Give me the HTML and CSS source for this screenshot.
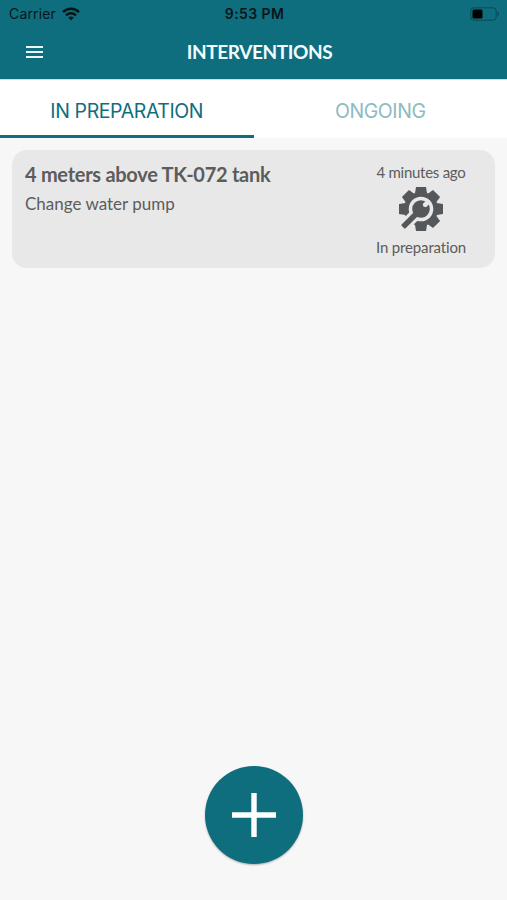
FILE: index.html
```html
<!DOCTYPE html>
<html lang="en">
<head>
    <meta charset="UTF-8">
    <meta name="viewport" content="width=device-width, initial-scale=1.0">
    <title>Interventions</title>
    <link rel="stylesheet" href="styles.css">
</head>
<body>
    <header>
        <div class="status-bar">
            <div class="carrier">
                <span>Carrier</span>
                <svg class="wifi" viewBox="0 0 18 14">
                    <path d="M1 5.1C5.5 .6 12.5 .6 17 5.1" fill="none" stroke="#07161a" stroke-width="2.5"/>
                    <path d="M4 8.3C6.8 5.6 11.2 5.6 14 8.3" fill="none" stroke="#07161a" stroke-width="2.5"/>
                    <path d="M6.2 10.6C7.8 9.1 10.2 9.1 11.8 10.6L9 13.4Z" fill="#07161a"/>
                </svg>
            </div>
            <div class="time">9:53 PM</div>
            <svg class="battery" viewBox="0 0 30 14">
                <rect x=".8" y=".8" width="25.4" height="12.4" rx="3" fill="none" stroke="#0a4954" stroke-width="1"/>
                <rect x="2.5" y="2.5" width="10" height="9" rx="1.5" fill="#000"/>
                <path d="M27.6 4.8C29.6 5.6 29.6 8.4 27.6 9.2Z" fill="#0a4954"/>
            </svg>
        </div>
        <div class="nav-bar">
            <button class="menu" aria-label="Menu">
                <span></span>
                <span></span>
                <span></span>
            </button>
            <h1>INTERVENTIONS</h1>
        </div>
    </header>

    <nav class="tabs">
        <a class="tab active">IN PREPARATION</a>
        <a class="tab">ONGOING</a>
    </nav>

    <main>
        <div class="card">
            <div class="card-text">
                <h2>4 meters above TK-072 tank</h2>
                <p>Change water pump</p>
            </div>
            <div class="card-status">
                <span class="date">4 minutes ago</span>
                <!-- Gear with a wrench -->
                <svg class="gear" viewBox="-22 -22 44 44">
                    <g fill="#54585a">
                        <circle r="17"/>
                        <path id="tooth" d="M-6.3 -14L-5 -22H5L6.3 -14Z"/>
                        <use href="#tooth" transform="rotate(45)"/>
                        <use href="#tooth" transform="rotate(90)"/>
                        <use href="#tooth" transform="rotate(135)"/>
                        <use href="#tooth" transform="rotate(180)"/>
                        <use href="#tooth" transform="rotate(270)"/>
                        <use href="#tooth" transform="rotate(315)"/>
                    </g>
                    <g transform="rotate(45)">
                        <circle r="12.3" fill="#e8e8e8"/>
                        <rect x="-5.8" y="8" width="11.6" height="17" fill="#e8e8e8"/>
                        <circle r="8.8" fill="#54585a"/>
                        <rect x="-2.8" y="6" width="5.6" height="19.6" rx="1" fill="#54585a"/>
                        <path d="M-2.3 -10V-4.8L0 -3.4L2.3 -4.8V-10Z" fill="#e8e8e8"/>
                    </g>
                </svg>
                <span class="state">In preparation</span>
            </div>
        </div>
    </main>

    <button class="add" aria-label="Add">
        <svg viewBox="0 0 44 44">
            <path d="M22 0V44M0 22H44" stroke="#fff" stroke-width="5.4"/>
        </svg>
    </button>
</body>
</html>
```

FILE: styles.css
```css
* {
    box-sizing: border-box;
}

body {
    margin: 0;
    height: 900px;
    display: flex;
    flex-direction: column;
    font-family: Lato, sans-serif;
    background-color: #f7f7f7;
    color: #5c5c5c;
}

h1, h2, p {
    margin: 0;
}

button {
    border: none;
    padding: 0;
    cursor: pointer;
}

header {
    height: 79px;
    background-color: #0f6e7e;
}

.status-bar {
    display: grid;
    grid-template-columns: 1fr auto 1fr;
    align-items: center;
    height: 27px;
    padding: 0 7px 0 9px;
    font-family: Inter, sans-serif;
    font-size: 14px;
    color: #07161a;
}

.carrier {
    display: flex;
    align-items: center;
    gap: 6px;
    letter-spacing: 0.15px;
}

.wifi {
    width: 18px;
    height: 14px;
}

.time {
    font-weight: 600;
    letter-spacing: 0.4px;
}

.battery {
    width: 30px;
    height: 14px;
    justify-self: end;
}

.nav-bar {
    display: grid;
    grid-template-columns: 60px 1fr 48px;
    align-items: center;
    height: 49px;
}

.menu {
    display: flex;
    flex-direction: column;
    gap: 3px;
    width: 17px;
    margin-left: 26px;
    background: none;
}

.menu span {
    height: 2px;
    background-color: #e8f8fa;
}

h1 {
    text-align: center;
    font-size: 19px;
    font-weight: 700;
    letter-spacing: -0.4px;
    color: #f2fdff;
}

.tabs {
    display: flex;
    height: 59px;
    background-color: #fff;
    border-top: 1px solid #c5e3e6;
}

.tab {
    flex: 1;
    padding-top: 4px;
    border-bottom: 3px solid transparent;
    text-align: center;
    font-family: Inter, sans-serif;
    font-size: 19.5px;
    line-height: 54px;
    letter-spacing: -0.4px;
    color: #8dbbbf;
}

.tab.active {
    color: #0f6e7e;
    border-bottom-color: #0f6e7e;
}

main {
    flex: 1;
    padding: 12px;
}

.card {
    display: flex;
    justify-content: space-between;
    height: 118px;
    padding: 12px 0 0 13px;
    border-radius: 15px;
    background-color: #e8e8e8;
}

h2 {
    font-size: 20px;
    line-height: 25px;
    font-weight: 700;
    letter-spacing: -0.28px;
}

.card-text p {
    margin-top: 6px;
    font-size: 17px;
    line-height: 22px;
}

.card-status {
    display: flex;
    flex-direction: column;
    align-items: center;
    width: 148px;
    font-size: 15px;
    line-height: 20px;
}

.date {
    letter-spacing: -0.27px;
}

.state {
    letter-spacing: -0.15px;
}

.gear {
    width: 44px;
    height: 44px;
    margin: 5px 0 6px;
}

.add {
    display: flex;
    align-items: center;
    justify-content: center;
    width: 98px;
    height: 98px;
    margin: 0 auto 36px;
    border-radius: 50%;
    background-color: #0f6e7e;
    box-shadow: 0 1px 2px rgba(0,0,0,0.3);
}

.add svg {
    width: 44px;
    height: 44px;
}
```
